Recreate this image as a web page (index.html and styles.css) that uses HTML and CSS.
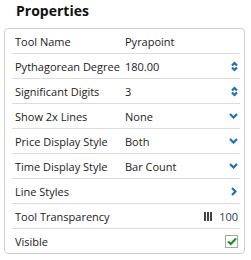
FILE: index.html
```html
<!DOCTYPE html>
<html>
<head>
<meta charset="utf-8">
<link rel="stylesheet" href="styles.css">
</head>
<body>
<div class="title">Properties</div>
<div class="panel">
  <div class="row"><span class="label">Tool Name</span><span class="value">Pyrapoint</span></div>
  <div class="row"><span class="label">Pythagorean Degree</span><span class="value">180.00</span>
    <svg class="icon" width="7" height="11" viewBox="0 0 7 11"><path d="M1 4.5 L3.5 2 L6 4.5 M1 6.5 L3.5 9 L6 6.5" fill="none" stroke="#1d6fbd" stroke-width="2.2"/></svg></div>
  <div class="row"><span class="label">Significant Digits</span><span class="value">3</span>
    <svg class="icon" width="7" height="11" viewBox="0 0 7 11"><path d="M1 4.5 L3.5 2 L6 4.5 M1 6.5 L3.5 9 L6 6.5" fill="none" stroke="#1d6fbd" stroke-width="2.2"/></svg></div>
  <div class="row"><span class="label">Show 2x Lines</span><span class="value">None</span>
    <svg class="icon" width="9" height="6" viewBox="0 0 9 6"><path d="M1 1 L4.5 4.5 L8 1" fill="none" stroke="#1d6fbd" stroke-width="2.2"/></svg></div>
  <div class="row"><span class="label">Price Display Style</span><span class="value">Both</span>
    <svg class="icon" width="9" height="6" viewBox="0 0 9 6"><path d="M1 1 L4.5 4.5 L8 1" fill="none" stroke="#1d6fbd" stroke-width="2.2"/></svg></div>
  <div class="row"><span class="label">Time Display Style</span><span class="value">Bar Count</span>
    <svg class="icon" width="9" height="6" viewBox="0 0 9 6"><path d="M1 1 L4.5 4.5 L8 1" fill="none" stroke="#1d6fbd" stroke-width="2.2"/></svg></div>
  <div class="row"><span class="label">Line Styles</span><span class="value"></span>
    <svg class="icon icon-r" width="6" height="9" viewBox="0 0 6 9"><path d="M1 1 L4.5 4.5 L1 8" fill="none" stroke="#1d6fbd" stroke-width="2.2"/></svg></div>
  <div class="row"><span class="label">Tool Transparency</span><span class="value"></span>
    <svg class="bars" width="8" height="9" viewBox="0 0 8 9"><rect x="0" y="0" width="2" height="9" fill="#444"/><rect x="3" y="0" width="2" height="9" fill="#444"/><rect x="6" y="0" width="2" height="9" fill="#444"/></svg>
    <span class="num">100</span></div>
  <div class="row last"><span class="label">Visible</span><span class="value"></span>
    <span class="check"><svg width="10" height="9" viewBox="0 0 10 9"><path d="M1 4.5 L3.8 7 L9 1.5" fill="none" stroke="#1f8f1f" stroke-width="2.2"/></svg></span></div>
</div>
</body>
</html>
```
FILE: styles.css
```css
html, body {
  margin: 0;
  padding: 0;
  background: #fff;
}
body {
  font-family: "Open Sans", "Liberation Sans", sans-serif;
  color: #222;
  width: 251px;
  height: 260px;
  overflow: hidden;
}
.title {
  font-weight: 700;
  font-size: 14px;
  line-height: 20px;
  height: 28px;
  padding-left: 16px;
  padding-top: 1px;
  box-sizing: border-box;
  color: #111;
}
.panel {
  margin-left: 4px;
  width: 241px;
  box-sizing: border-box;
  border: 1px solid #cfcfcf;
  border-radius: 4px;
  padding: 0 4px 0 7px;
}
.row {
  display: flex;
  align-items: center;
  height: 25px;
  box-sizing: border-box;
  border-bottom: 1px solid #dcdcdc;
  padding: 0 2px 0 3px;
  font-size: 11px;
  white-space: nowrap;
}
.row.last {
  border-bottom: none;
  height: 24px;
}
.label {
  width: 110px;
  flex: none;
}
.value {
  flex: 1;
}
.icon {
  display: block;
  flex: none;
}
.icon-r {
  margin-right: 1px;
}
.bars {
  display: block;
  margin-right: 7px;
}
.num {
  color: #2b3a58;
}
.check {
  width: 11px;
  height: 11px;
  border: 1px solid #a8a8a8;
  display: flex;
  align-items: center;
  justify-content: center;
}
```
